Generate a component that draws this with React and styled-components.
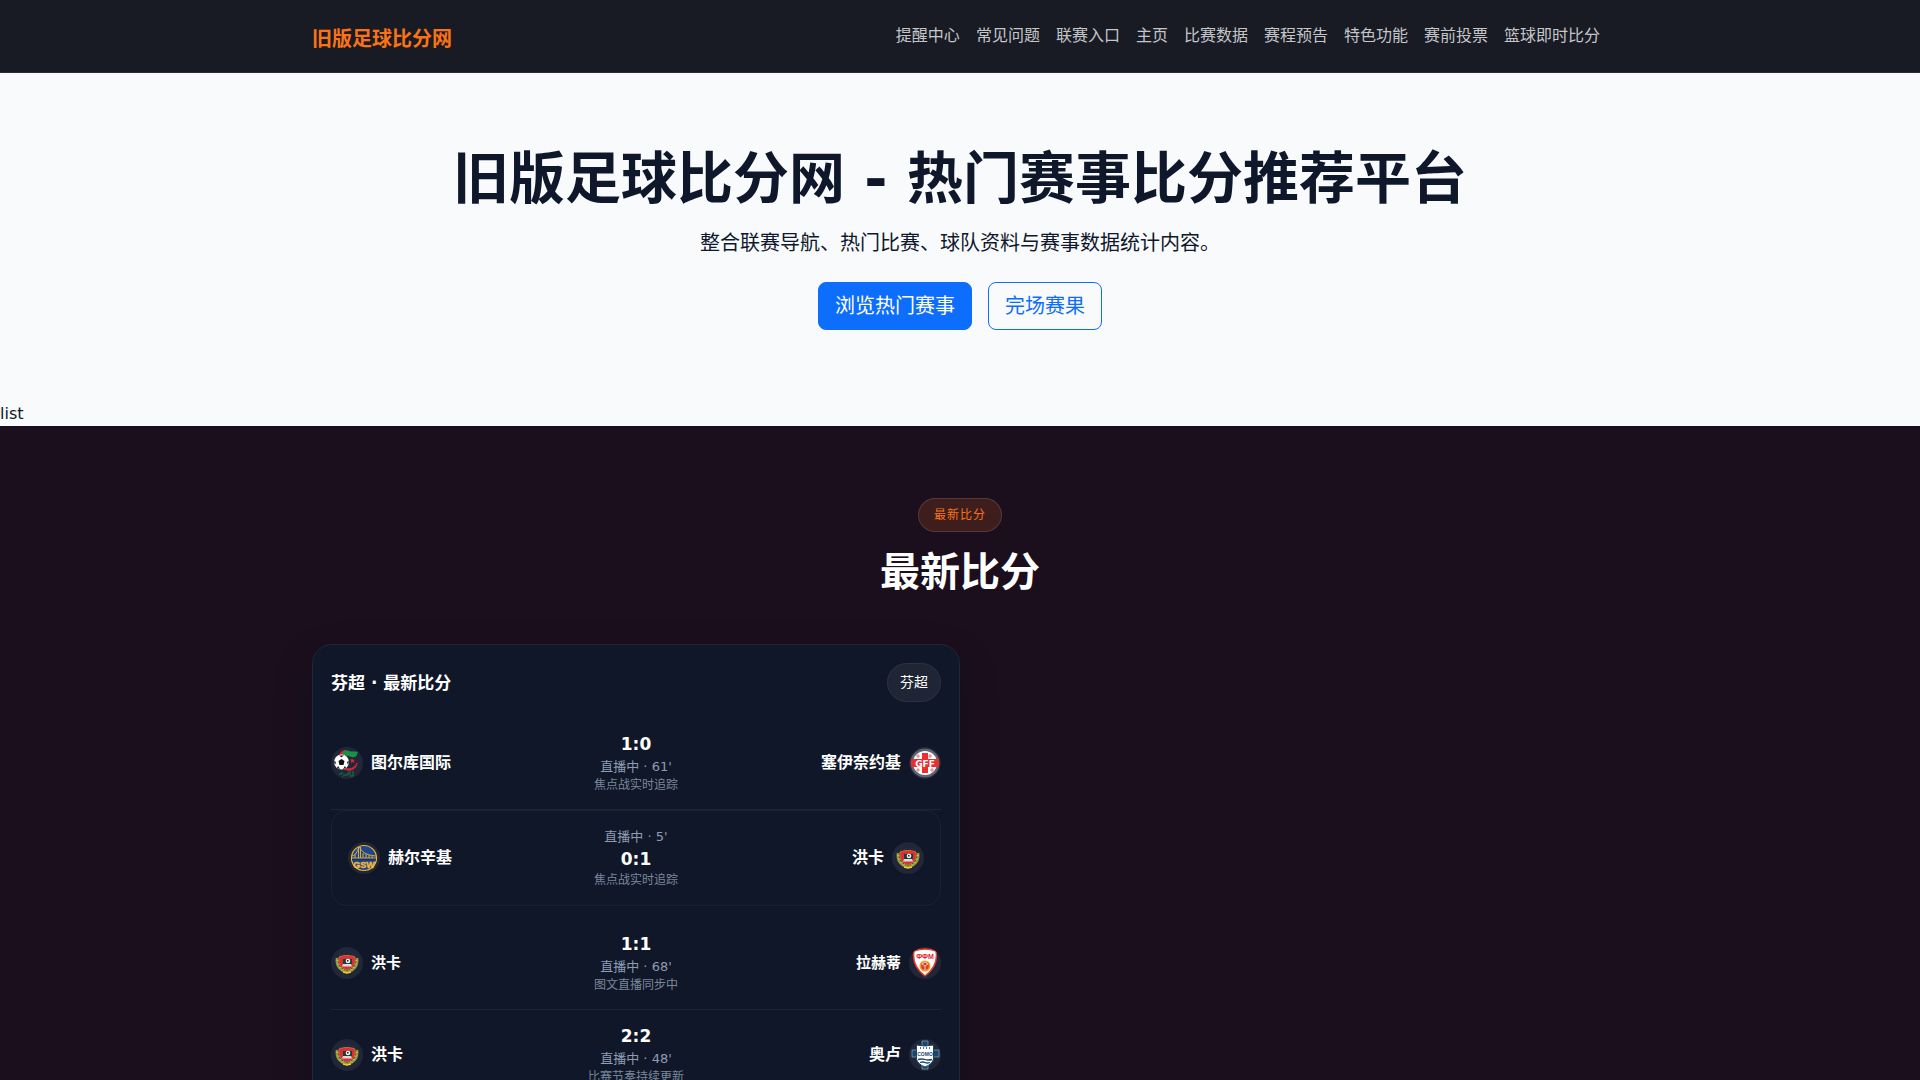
import React from 'react';
import styled, { createGlobalStyle, css } from 'styled-components';

const GlobalStyle = createGlobalStyle`
  * {
    box-sizing: border-box;
  }
  body {
    margin: 0;
    background: #f8fafc;
    color: #0f172a;
    font-family: "DejaVu Sans", "Noto Sans CJK SC", sans-serif;
    font-size: 16px;
    line-height: 24px;
  }
  html {
    overflow: hidden;
  }
`;

const Container = styled.div`
  width: 100%;
  max-width: 1320px;
  margin: 0 auto;
  padding: 0 12px;
`;

const Header = styled.header`
  padding: 16px 0;
  background: #181b24;
  border-bottom: 1px solid #2b2d35;
`;

const HeaderInner = styled(Container)`
  display: flex;
  align-items: center;
  justify-content: space-between;
`;

const Brand = styled.a`
  padding: 8px 0 2px;
  color: #f97316;
  font-size: 20px;
  font-weight: 700;
  line-height: 30px;
  text-decoration: none;
`;

const Nav = styled.nav`
  display: flex;
`;

const NavLink = styled.a`
  padding: 8px;
  color: #c6c6c9;
  text-decoration: none;
`;

const Hero = styled.section`
  padding: 72px 12px;
  text-align: center;
`;

const HeroTitle = styled.h1`
  margin: 0 0 16px;
  font-size: 56px;
  font-weight: 700;
  line-height: 67px;
`;

const HeroText = styled.p`
  margin: 0 0 24px;
  font-size: 20px;
  line-height: 30px;
`;

const Actions = styled.div`
  display: flex;
  justify-content: center;
  gap: 16px;
`;

const ButtonLink = styled.a`
  padding: 8px 16px;
  border: 1px solid #0d6efd;
  border-radius: 8px;
  background: ${props => (props.$primary ? '#0d6efd' : 'transparent')};
  color: ${props => (props.$primary ? '#fff' : '#0d6efd')};
  font-size: 20px;
  line-height: 30px;
  text-decoration: none;
`;

const Scores = styled.section`
  padding: 72px 0;
  background: #1b0f1e;
  color: #fff;
`;

const SectionHead = styled.div`
  display: flex;
  flex-direction: column;
  align-items: center;
  gap: 16px;
  margin-bottom: 48px;
`;

const Badge = styled.span`
  padding: 8px 15px;
  border: 1px solid rgba(255, 255, 255, 0.12);
  border-radius: 999px;
  background: rgba(249, 115, 22, 0.16);
  color: #f97316;
  font-size: 12px;
  letter-spacing: 1px;
  line-height: 16px;
`;

const SectionTitle = styled.h2`
  margin: 0;
  font-size: 40px;
  font-weight: 700;
  line-height: 48px;
`;

const CardGrid = styled.div`
  display: grid;
  grid-template-columns: 1fr 1fr;
`;

const Card = styled.article`
  padding: 18px;
  border: 1px solid #1f2738;
  border-radius: 20px;
  background: #101728;
  box-shadow: 0 16px 40px rgba(0, 0, 0, 0.2);
`;

const CardHead = styled.div`
  display: flex;
  align-items: center;
  justify-content: space-between;
  margin-bottom: 16px;
`;

const CardTitle = styled.h3`
  margin: 0;
  font-size: 17px;
  font-weight: 700;
`;

const Chip = styled.span`
  padding: 8px 12px;
  border: 1px solid #2c3344;
  border-radius: 999px;
  background: #1f2535;
  font-size: 14px;
  line-height: 21px;
`;

const Match = styled.div`
  display: grid;
  grid-template-columns: 1fr auto 1fr;
  align-items: center;
  padding: 14px 0 15px;
  border-bottom: 1px solid #1d2435;
  font-size: ${props => (props.$small ? 15 : 16)}px;

  ${props =>
    props.$boxed &&
    css`
      margin-bottom: 12px;
      padding: 16px;
      border: 1px solid #1a2132;
      border-radius: 16px;
    `}
`;

const Team = styled.div`
  display: flex;
  flex-direction: ${props => (props.$away ? 'row-reverse' : 'row')};
  align-items: center;
  gap: 8px;
  font-weight: 700;
`;

const Crest = styled.span`
  display: flex;
  width: 32px;
  height: 32px;
  border-radius: 50%;
  background: #212738;
  overflow: hidden;
`;

const Center = styled.div`
  display: flex;
  flex-direction: column;
  text-align: center;
`;

const Score = styled.strong`
  font-size: 17px;
  line-height: 25px;
`;

const Status = styled.span`
  color: #8e9cb5;
  font-size: 13px;
  line-height: 20px;
`;

const Note = styled.span`
  color: #7a879b;
  font-size: 12px;
  line-height: 17px;
`;

const svgProps = { viewBox: '0 0 32 32', width: 32, height: 32, 'aria-hidden': true };

const Algeria = () => (
  <svg {...svgProps}>
    <path d="M8 9c2-5 7-7 10-5 3 1 6 0 9 1-1 2-1 4-3 5-5 1-7-3-16-1z" fill="#159447" />
    <path d="M8 9C9 5 12 3 15 3c-3 2-4 4-5 7z" fill="#e12330" />
    <path d="M13 21c6 2 11 0 13-5-1 6-6 9-13 6z" fill="#e12330" stroke="#e12330" />
    <path d="M21 11l1 2 2-.5-1.300 1.500 1 2-2-1-2 1 .5-2-1.500-1.500h2z" fill="#e12330" />
    <circle cx="10.500" cy="15" r="7.500" fill="#fff" />
    <path d="M10.500 12l3 2-1 4h-4l-1-4zM8 8.500h5l-2.500 1.800zM3 14l2 1-1 3zM18 14l-2 1 1 3zM6 21l1-2 2 3zM15 21l-1-2-2 3z" fill="#111" />
    <path d="M8 27h3v-2m1 3h5v-3m2 3v-4m3 0v5h-3m-8 1h1m5-7v1" fill="none" stroke="#147b42" />
  </svg>
);

const Gff = () => (
  <svg {...svgProps}>
    <circle cx="16" cy="16" r="14.500" fill="#5f656e" />
    <circle cx="16" cy="16" r="12" fill="#fff" />
    <path d="M13 6h6v20h-6zM2 12h28v8H2z" fill="#ed2d32" />
    <path d="M9 7v4m-2-2h4m10-2v4m-2-2h4M9 21v4m-2-2h4m12-2v4m-2-2h4" stroke="#ed7777" />
    <text x="16" y="19.500" textAnchor="middle" fill="#fff" fontFamily="DejaVu Sans" fontSize="9" fontWeight="700">GFF</text>
  </svg>
);

const Warriors = () => (
  <svg {...svgProps}>
    <circle cx="16" cy="16" r="12.500" fill="#20458e" stroke="#efb52b" strokeWidth="1.200" />
    <path d="M4 15.500h24v3H4z" fill="#173268" />
    <path d="M4 16h24M10.500 6v10m2-11v11M4 14c4-1 5-4 7-9 3 4 5 8 17 9M7 12v4m8-5v5m3-4v4m3-3v3m3-2v2" fill="none" stroke="#e9b83a" strokeWidth=".9" />
    <text x="16" y="26" textAnchor="middle" fill="#f5b936" stroke="#f5b936" strokeWidth=".4" fontFamily="Liberation Sans" fontSize="9" fontWeight="700">GSW</text>
  </svg>
);

const Honka = () => (
  <svg {...svgProps}>
    <path d="M8 8h2m2-1h2m3 0h2m2 1h3" stroke="#2c3133" strokeWidth="1.500" />
    <path d="M6 11c-1 7 2 12 10 14 8-2 11-7 10-14" fill="none" stroke="#93983f" strokeWidth="2.500" />
    <path d="M5 13l3 1m-2 3l3 0m-1 4l3-1m-1 4l3-2M27 13l-3 1m2 3l-3 0m1 4l-3-1m1 4l-3-2" stroke="#d4c748" strokeWidth=".8" />
    <path d="M8 10c5-2 11-2 16 0 1 8-2 11-8 13-6-2-9-5-8-13z" fill="#e22c32" stroke="#b58a4a" strokeWidth=".8" />
    <path d="M12 12h9v5h-9z" fill="#163f3e" />
    <circle cx="17" cy="14" r="2.300" fill="#f2f2eb" />
    <path d="M11 19.500l1-2.500h8l1 2.500z" fill="#dbdada" />
    <path d="M16 13h1.500v1.500H16z" fill="#202326" />
    <path d="M12 25l4 1 4-1" stroke="#edcf30" strokeWidth="1.500" fill="none" />
  </svg>
);

const Macedonia = () => (
  <svg {...svgProps}>
    <path d="M5 4q11-4 22 0c2 11-3 19-11 25C8 23 3 15 5 4z" fill="#fff" stroke="#e33a2a" strokeWidth="1.500" />
    <text x="16" y="12" textAnchor="middle" fill="#dc2730" fontFamily="Liberation Sans" fontSize="7" fontWeight="700">ФФМ</text>
    <circle cx="16" cy="19" r="5.500" fill="#f29a2c" />
    <circle cx="16" cy="19" r="3.800" fill="#d93b2c" />
    <path d="M16 19l-3-2m3 2l3-2m-3 2v4m-3-6l3-2 3 2" fill="none" stroke="#fff0d0" strokeWidth=".8" />
  </svg>
);

const Como = () => (
  <svg {...svgProps}>
    <path d="M13 2h6v28h-6zM3 11h27v7H3z" fill="#17466f" stroke="#9fb7c8" strokeWidth=".6" />
    <path d="M7.500 6q8.500 2 17 0v14q-1 5-8.500 8-7.500-3-8.500-8z" fill="#fff" stroke="#17466f" />
    <path d="M11 9h1m2 0h1m2 0h1m2 0h1" stroke="#17466f" strokeWidth="1.500" />
    <text x="16" y="17" textAnchor="middle" fill="#17466f" fontFamily="Liberation Sans" fontSize="5" fontWeight="700">COMO</text>
    <path d="M9 20.500q4-1 7 0t7 0M11 23.500q3-1 5 0t5 0" fill="none" stroke="#17466f" strokeWidth="1.300" />
  </svg>
);

const links = [
  '提醒中心',
  '常见问题',
  '联赛入口',
  '主页',
  '比赛数据',
  '赛程预告',
  '特色功能',
  '赛前投票',
  '篮球即时比分'
];

const matches = [
  { home: '图尔库国际', homeLogo: <Algeria />, away: '塞伊奈约基', awayLogo: <Gff />, score: '1:0', status: "直播中 · 61'", note: '焦点战实时追踪' },
  { home: '赫尔辛基', homeLogo: <Warriors />, away: '洪卡', awayLogo: <Honka />, score: '0:1', status: "直播中 · 5'", note: '焦点战实时追踪', boxed: true },
  { home: '洪卡', homeLogo: <Honka />, away: '拉赫蒂', awayLogo: <Macedonia />, score: '1:1', status: "直播中 · 68'", note: '图文直播同步中', small: true },
  { home: '洪卡', homeLogo: <Honka />, away: '奥卢', awayLogo: <Como />, score: '2:2', status: "直播中 · 48'", note: '比赛节奏持续更新' }
];

const MatchRow = ({ match }) => (
  <Match $boxed={match.boxed} $small={match.small}>
    <Team>
      <Crest>{match.homeLogo}</Crest>
      {match.home}
    </Team>
    <Center>
      {match.boxed && <Status>{match.status}</Status>}
      <Score>{match.score}</Score>
      {!match.boxed && <Status>{match.status}</Status>}
      <Note>{match.note}</Note>
    </Center>
    <Team $away>
      <Crest>{match.awayLogo}</Crest>
      {match.away}
    </Team>
  </Match>
);

export default function App() {
  return (
    <>
      <GlobalStyle />
      <Header>
        <HeaderInner>
          <Brand href="/">旧版足球比分网</Brand>
          <Nav>
            {links.map(link => (
              <NavLink href="#" key={link}>{link}</NavLink>
            ))}
          </Nav>
        </HeaderInner>
      </Header>

      <Hero>
        <HeroTitle>旧版足球比分网 - 热门赛事比分推荐平台</HeroTitle>
        <HeroText>整合联赛导航、热门比赛、球队资料与赛事数据统计内容。</HeroText>
        <Actions>
          <ButtonLink href="#scores" $primary>浏览热门赛事</ButtonLink>
          <ButtonLink href="#results">完场赛果</ButtonLink>
        </Actions>
      </Hero>
      list

      <Scores id="scores">
        <Container>
          <SectionHead>
            <Badge>最新比分</Badge>
            <SectionTitle>最新比分</SectionTitle>
          </SectionHead>
          <CardGrid>
            <Card>
              <CardHead>
                <CardTitle>芬超 · 最新比分</CardTitle>
                <Chip>芬超</Chip>
              </CardHead>
              {matches.map(match => (
                <MatchRow match={match} key={match.score} />
              ))}
            </Card>
          </CardGrid>
        </Container>
      </Scores>
    </>
  );
}
